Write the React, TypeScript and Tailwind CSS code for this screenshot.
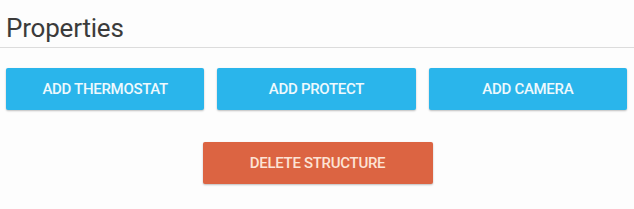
export default function App() {
  const addButtons = ["ADD THERMOSTAT", "ADD PROTECT", "ADD CAMERA"];

  return (
    <div className="w-[634px] h-[209px] bg-[#fdfdfd] font-['Roboto',sans-serif]">
      <div className="pl-[6px] pr-[6px] pt-[12px] h-[48px] border-b border-[#dcdcdc]">
        <h1 className="text-[26px] leading-[32px] text-[#3b3b3b] font-normal tracking-[-0.2px]">Properties</h1>
      </div>
      <div className="pl-[6px] pr-[7px] pt-[20px] grid grid-cols-3 gap-[13px]">
        {addButtons.map((label) => (
          <button
            key={label}
            className="h-[42px] rounded-[2px] bg-[#2ab5eb] text-[#eef9fd] text-[15px] font-medium tracking-[-0.3px] shadow-[0_1px_2px_rgba(0,0,0,0.25)]"
          >
            {label}
          </button>
        ))}
      </div>
      <div className="flex justify-center pt-[32px]">
        <button className="w-[230px] h-[42px] ml-[1px] rounded-[2px] bg-[#dc6442] text-[#fde3d5] text-[15px] font-medium tracking-[-0.3px] shadow-[0_1px_2px_rgba(0,0,0,0.25)]">
          DELETE STRUCTURE
        </button>
      </div>
    </div>
  );
}
